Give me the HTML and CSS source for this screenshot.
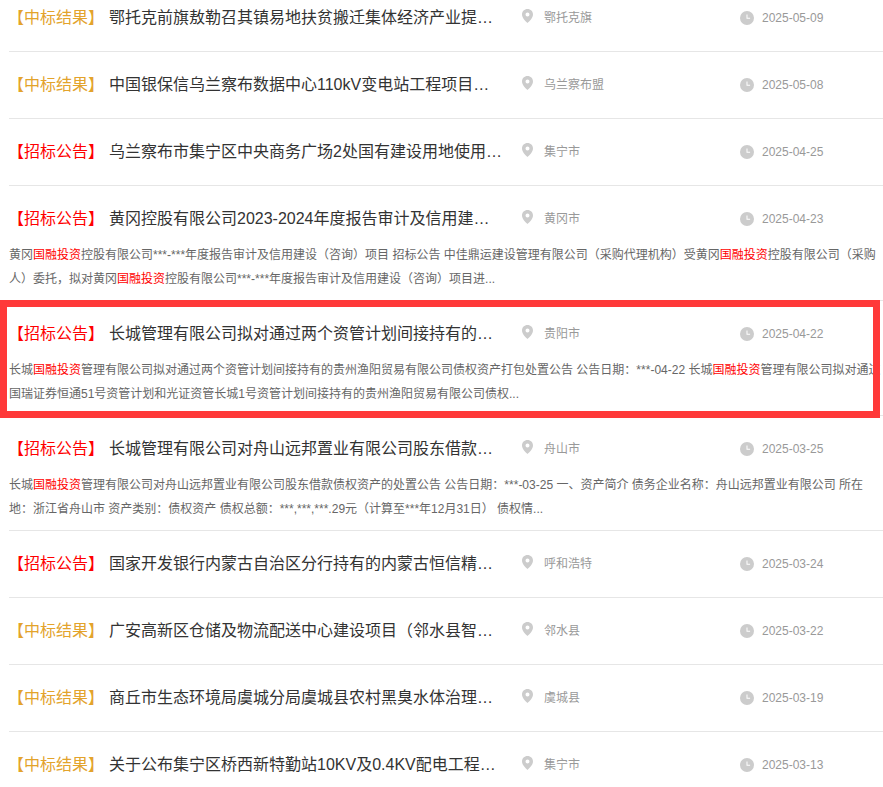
FILE: index.html
```html
<!DOCTYPE html>
<html lang="zh-CN">
<head>
  <meta charset="UTF-8" />
  <meta name="viewport" content="width=device-width, initial-scale=1.0"/>
  <title>招标公告列表</title>
  <link rel="stylesheet" href="styles.css">
</head>
<body>
  <svg class="icon-defs" width="0" height="0">
    <symbol id="pin" viewBox="0 0 11 14">
      <path fill-rule="evenodd" d="M5.5 0C2.4 0 0 2.4 0 5.4 0 9 3.6 12 5.5 14 7.4 12 11 9 11 5.4 11 2.4 8.6 0 5.5 0zm0 3.4a2 2 0 1 1 0 4 2 2 0 0 1 0-4z"/>
    </symbol>
    <symbol id="clock" viewBox="0 0 14 14">
      <path fill-rule="evenodd" d="M7 0a7 7 0 1 1 0 14A7 7 0 0 1 7 0zM6.5 3.5v4.2h3.6V6.8H7.5V3.5z"/>
    </symbol>
  </svg>

  <ul class="result-list">
    <li class="result-item">
      <div class="result-head">
        <span class="tag tag-win">【中标结果】</span>
        <a class="result-title" href="#">鄂托克前旗敖勒召其镇易地扶贫搬迁集体经济产业提升项目中标结果公告</a>
        <span class="result-area"><svg class="icon-pin"><use href="#pin"/></svg>鄂托克旗</span>
        <span class="result-date"><svg class="icon-clock"><use href="#clock"/></svg>2025-05-09</span>
      </div>
    </li>
    <li class="result-item">
      <div class="result-head">
        <span class="tag tag-win">【中标结果】</span>
        <a class="result-title" href="#">中国银保信乌兰察布数据中心110kV变电站工程项目中标结果公告</a>
        <span class="result-area"><svg class="icon-pin"><use href="#pin"/></svg>乌兰察布盟</span>
        <span class="result-date"><svg class="icon-clock"><use href="#clock"/></svg>2025-05-08</span>
      </div>
    </li>
    <li class="result-item">
      <div class="result-head">
        <span class="tag tag-bid">【招标公告】</span>
        <a class="result-title" href="#">乌兰察布市集宁区中央商务广场2处国有建设用地使用权挂牌出让公告</a>
        <span class="result-area"><svg class="icon-pin"><use href="#pin"/></svg>集宁市</span>
        <span class="result-date"><svg class="icon-clock"><use href="#clock"/></svg>2025-04-25</span>
      </div>
    </li>
    <li class="result-item">
      <div class="result-head">
        <span class="tag tag-bid">【招标公告】</span>
        <a class="result-title" href="#">黄冈控股有限公司2023-2024年度报告审计及信用建设（咨询）项目招标公告</a>
        <span class="result-area"><svg class="icon-pin"><use href="#pin"/></svg>黄冈市</span>
        <span class="result-date"><svg class="icon-clock"><use href="#clock"/></svg>2025-04-23</span>
      </div>
      <p class="result-desc">黄冈<em>国融投资</em>控股有限公司***-***年度报告审计及信用建设（咨询）项目 招标公告 中佳鼎运建设管理有限公司（采购代理机构）受黄冈<em>国融投资</em>控股有限公司（采购人）委托，拟对黄冈<em>国融投资</em>控股有限公司***-***年度报告审计及信用建设（咨询）项目进...</p>
    </li>
    <li class="result-item is-marked">
      <div class="result-head">
        <span class="tag tag-bid">【招标公告】</span>
        <a class="result-title" href="#">长城管理有限公司拟对通过两个资管计划间接持有的贵州渔阳贸易有限公司债权资产打包处置公告</a>
        <span class="result-area"><svg class="icon-pin"><use href="#pin"/></svg>贵阳市</span>
        <span class="result-date"><svg class="icon-clock"><use href="#clock"/></svg>2025-04-22</span>
      </div>
      <p class="result-desc">长城<em>国融投资</em>管理有限公司拟对通过两个资管计划间接持有的贵州渔阳贸易有限公司债权资产打包处置公告 公告日期：***-04-22 长城<em>国融投资</em>管理有限公司拟对通过国瑞证券恒通51号资管计划和光证资管长城1号资管计划间接持有的贵州渔阳贸易有限公司债权...</p>
      <div class="mark-box"></div>
    </li>
    <li class="result-item">
      <div class="result-head">
        <span class="tag tag-bid">【招标公告】</span>
        <a class="result-title" href="#">长城管理有限公司对舟山远邦置业有限公司股东借款债权资产的处置公告</a>
        <span class="result-area"><svg class="icon-pin"><use href="#pin"/></svg>舟山市</span>
        <span class="result-date"><svg class="icon-clock"><use href="#clock"/></svg>2025-03-25</span>
      </div>
      <p class="result-desc">长城<em>国融投资</em>管理有限公司对舟山远邦置业有限公司股东借款债权资产的处置公告 公告日期：***-03-25 一、资产简介 债务企业名称：舟山远邦置业有限公司 所在地：浙江省舟山市 资产类别：债权资产 债权总额：***,***,***.29元（计算至***年12月31日） 债权情...</p>
    </li>
    <li class="result-item">
      <div class="result-head">
        <span class="tag tag-bid">【招标公告】</span>
        <a class="result-title" href="#">国家开发银行内蒙古自治区分行持有的内蒙古恒信精细化工有限公司债权转让公告</a>
        <span class="result-area"><svg class="icon-pin"><use href="#pin"/></svg>呼和浩特</span>
        <span class="result-date"><svg class="icon-clock"><use href="#clock"/></svg>2025-03-24</span>
      </div>
    </li>
    <li class="result-item">
      <div class="result-head">
        <span class="tag tag-win">【中标结果】</span>
        <a class="result-title" href="#">广安高新区仓储及物流配送中心建设项目（邻水县智慧物流园）中标结果公告</a>
        <span class="result-area"><svg class="icon-pin"><use href="#pin"/></svg>邻水县</span>
        <span class="result-date"><svg class="icon-clock"><use href="#clock"/></svg>2025-03-22</span>
      </div>
    </li>
    <li class="result-item">
      <div class="result-head">
        <span class="tag tag-win">【中标结果】</span>
        <a class="result-title" href="#">商丘市生态环境局虞城分局虞城县农村黑臭水体治理项目中标结果公告</a>
        <span class="result-area"><svg class="icon-pin"><use href="#pin"/></svg>虞城县</span>
        <span class="result-date"><svg class="icon-clock"><use href="#clock"/></svg>2025-03-19</span>
      </div>
    </li>
    <li class="result-item">
      <div class="result-head">
        <span class="tag tag-win">【中标结果】</span>
        <a class="result-title" href="#">关于公布集宁区桥西新特勤站10KV及0.4KV配电工程中标结果的公告</a>
        <span class="result-area"><svg class="icon-pin"><use href="#pin"/></svg>集宁市</span>
        <span class="result-date"><svg class="icon-clock"><use href="#clock"/></svg>2025-03-13</span>
      </div>
    </li>
  </ul>
</body>
</html>
```

FILE: styles.css
```css
* {
  margin: 0;
  padding: 0;
  box-sizing: border-box;
}

html, body {
  height: 787px;
  overflow: hidden;
}

body {
  font-family: "Liberation Sans", "Noto Sans CJK SC", sans-serif;
  background-color: #fff;
  color: #333;
}

.icon-defs {
  display: block;
  height: 0;
}

/* list, scrolled a little past the first row's top */
.result-list {
  list-style: none;
  margin-top: -15px;
  padding-left: 9px;
}

.result-item {
  position: relative;
  border-bottom: 1px solid #e6e6e6;
}

.result-head {
  display: flex;
  align-items: center;
  height: 66px;
  padding-bottom: 4px;
}

.tag {
  flex: none;
  width: 101px;
  margin-left: -1px;
  font-size: 16px;
}

.tag-win { color: #e3a32b; }
.tag-bid { color: #f00; }

.result-title {
  flex: none;
  width: 393px;
  font-size: 16px;
  color: #333;
  text-decoration: none;
  white-space: nowrap;
  overflow: hidden;
  text-overflow: ellipsis;
}

.result-area,
.result-date {
  display: flex;
  align-items: center;
  flex: none;
  font-size: 12px;
  color: #999;
}

.result-area {
  width: 218px;
  margin-left: 20px;
}

.result-date {
  margin-top: 3px;
}

.icon-pin {
  width: 11px;
  height: 14px;
  margin-right: 11px;
  fill: #ccc;
}

.icon-clock {
  width: 14px;
  height: 14px;
  margin-right: 8px;
  fill: #ccc;
}

.result-desc {
  height: 48px;
  font-size: 12px;
  line-height: 24px;
  color: #666;
  overflow: hidden;
  margin-top: -9px;
  margin-bottom: 9px;
}

.result-desc em {
  font-style: normal;
  color: #f00;
}

/* red annotation frame drawn over the row */
.mark-box {
  position: absolute;
  top: -1px;
  left: -9px;
  width: 880px;
  height: 118px;
  border: 7px solid #ff3939;
}
```
